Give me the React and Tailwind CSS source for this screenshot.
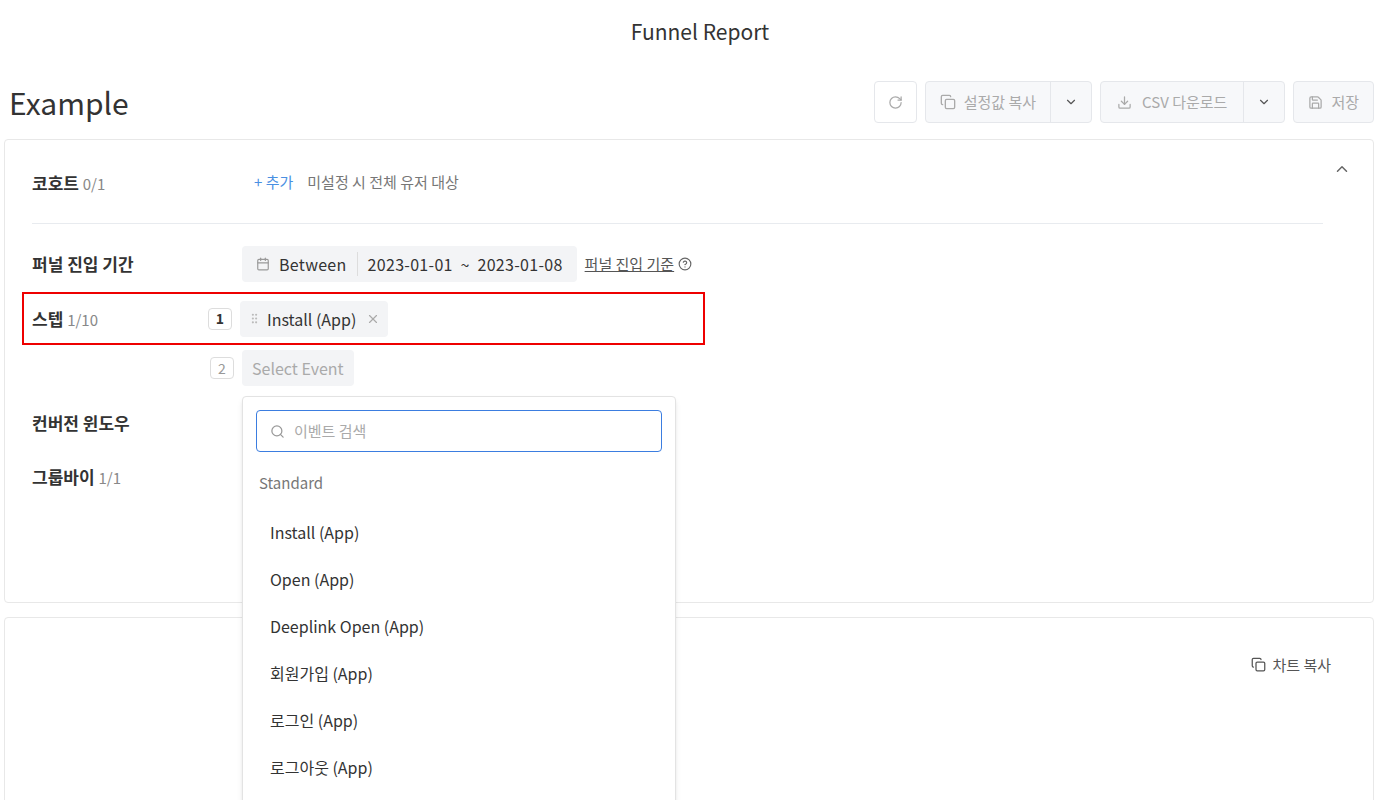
import React from 'react';
import { RotateCw, Copy, ChevronDown, ChevronUp, Download, Save, Calendar, HelpCircle, X, GripVertical, Search } from 'lucide-react';

const font = { fontFamily: '"Noto Sans CJK KR", "Noto Sans", sans-serif' };

function Label({ title, count }) {
  return (
    <div className="w-[178px] shrink-0 text-[17px] font-bold text-[#333]">
      {title} {count && <span className="text-[15px] font-normal text-[#888]">{count}</span>}
    </div>
  );
}

const items = ['Install (App)', 'Open (App)', 'Deeplink Open (App)', '회원가입 (App)', '로그인 (App)', '로그아웃 (App)'];

export default function App() {
  return (
    <div style={font} className="relative h-[800px] overflow-hidden bg-white text-[#333]">
      <div className="pt-[16px] text-center text-[21px] text-[#333]">Funnel Report</div>

      <div className="mt-[32px] flex items-center justify-between pl-[9px] pr-[26px]">
        <div className="text-[30px] text-[#333]">Example</div>
        <div className="flex items-center gap-[8px] text-[15px] text-[#aaa]">
          <button className="flex h-[42px] w-[43px] items-center justify-center rounded border border-[#e5e7eb] bg-white">
            <RotateCw size={15} />
          </button>
          <div className="flex h-[42px] items-center rounded border border-[#e5e7eb] bg-[#f7f8fa]">
            <span className="flex items-center gap-[8px] px-[14px]"><Copy size={16} />설정값 복사</span>
            <span className="flex h-full w-[41px] items-center justify-center border-l border-[#e5e7eb] text-[#555]"><ChevronDown size={14} /></span>
          </div>
          <div className="flex h-[42px] items-center rounded border border-[#e5e7eb] bg-[#f7f8fa]">
            <span className="flex items-center gap-[10px] px-[16px]"><Download size={15} />CSV 다운로드</span>
            <span className="flex h-full w-[41px] items-center justify-center border-l border-[#e5e7eb] text-[#555]"><ChevronDown size={14} /></span>
          </div>
          <button className="flex h-[42px] items-center gap-[8px] rounded border border-[#e5e7eb] bg-[#f7f8fa] px-[14px]">
            <Save size={15} />저장
          </button>
        </div>
      </div>

      <div className="mx-[4px] mt-[14px] mr-[26px] h-[464px] rounded border border-[#e8e8e8] px-[27px] pt-[30px]">
        <div className="flex items-center">
          <Label title="코호트" count="0/1" />
          <div className="ml-[44px] flex items-center gap-[14px] text-[15px]">
            <span className="text-[#4a90e2]">+ 추가</span>
            <span className="text-[#777]">미설정 시 전체 유저 대상</span>
          </div>
          <ChevronUp size={18} className="ml-auto -mr-[5px] -mt-[26px] text-[#666]" />
        </div>
        <div className="mt-[28px] mr-[23px] border-t border-[#e8ebef]" />

        <div className="mt-[22px] flex items-center">
          <Label title="퍼널 진입 기간" />
          <div className="ml-[32px] flex h-[36px] items-center rounded bg-[#f3f4f6] px-[14px] text-[16px] tracking-[0.3px] text-[#333]">
            <Calendar size={14} className="text-[#999]" />
            <span className="ml-[9px] pr-[10px] border-r border-[#ddd]">Between</span>
            <span className="ml-[10px]">2023-01-01 &nbsp;~&nbsp; 2023-01-08</span>
          </div>
          <span className="ml-[8px] text-[15px] text-[#555] underline">퍼널 진입 기준</span>
          <HelpCircle size={14} className="ml-[4px] text-[#666]" />
        </div>

        <div className="-mx-[10px] mt-[10px] flex h-[53px] w-[683px] items-center border-2 border-[#e00] px-[8px]">
          <Label title="스텝" count="1/10" />
          <span className="-ml-[2px] flex h-[22px] w-[24px] items-center justify-center rounded border border-[#ddd] text-[14px] font-bold">1</span>
          <div className="ml-[8px] flex h-[36px] items-center rounded bg-[#f3f4f6] px-[8px] text-[16px]">
            <GripVertical size={13} className="text-[#bbb]" />
            <span className="ml-[6px]">Install (App)</span>
            <X size={14} className="ml-[10px] text-[#aaa]" />
          </div>
        </div>

        <div className="mt-[5px] flex items-center pl-[178px]">
          <span className="flex h-[22px] w-[24px] items-center justify-center rounded border border-[#ddd] text-[14px] text-[#999]">2</span>
          <div className="ml-[8px] flex h-[36px] items-center rounded bg-[#f3f4f6] px-[10px] text-[16px] text-[#aaa]">Select Event</div>
        </div>

        <div className="mt-[24px]"><Label title="컨버전 윈도우" /></div>
        <div className="mt-[28px]"><Label title="그룹바이" count="1/1" /></div>
      </div>

      <div className="mx-[4px] mt-[14px] mr-[26px] h-[200px] rounded border border-[#e8e8e8]">
        <div className="flex justify-end pr-[42px] pt-[36px] text-[15px] text-[#555]">
          <span className="flex items-center gap-[6px]"><Copy size={15} />차트 복사</span>
        </div>
      </div>

      <div className="absolute left-[242px] top-[396px] h-[420px] w-[434px] rounded border border-[#e3e3e3] bg-white shadow-md">
        <div className="mx-[13px] mt-[13px] flex h-[42px] items-center rounded border border-[#3b7de0] px-[13px] text-[15px] text-[#aaa]">
          <Search size={15} className="text-[#999]" />
          <span className="ml-[9px]">이벤트 검색</span>
        </div>
        <div className="mt-[20px] pl-[16px] text-[15px] text-[#777]">Standard</div>
        <div className="mt-[14px]">
          {items.map(t => (
            <div key={t} className="flex h-[47px] items-center pl-[27px] text-[16px] text-[#333]">{t}</div>
          ))}
        </div>
      </div>
    </div>
  );
}
